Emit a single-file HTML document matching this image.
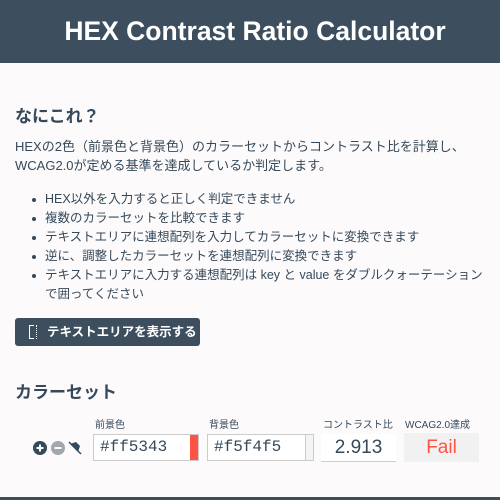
<!DOCTYPE html>
<html><head><meta charset="utf-8"><style>
*{margin:0;padding:0;box-sizing:border-box}
body{width:500px;height:500px;overflow:hidden;background:#fcfafb;font-family:"Liberation Sans","Noto Sans CJK JP",sans-serif;color:#35495a;position:relative}
.hd{position:absolute;left:0;top:0;width:500px;height:63px;background:#3d4f5f;color:#fff;font-weight:bold;font-size:26.5px;text-align:center;line-height:63px;padding-left:10px}
.a{position:absolute;white-space:nowrap}
h2{font-size:17px;font-weight:bold}
p{font-size:13px;line-height:19px}
ul{font-size:12.5px;line-height:19px;list-style:none}
ul li{position:relative;padding-left:0}
ul li:before{content:"";position:absolute;left:-13px;top:8px;width:4px;height:4px;border-radius:50%;background:#35495a}
.btn{position:absolute;left:15px;top:318px;width:185px;height:28px;background:#3d4f5f;border-radius:3px;color:#fff;font-size:12.5px;font-weight:bold;line-height:28px;padding-left:32px}
.lb{font-size:10px;color:#35495a}
.in{position:absolute;top:434px;height:27px;border:1px solid #ccc;background:#fff;font-family:"Liberation Mono",monospace;font-size:16px;line-height:25px;padding-left:6px}
</style></head><body>
<div class="hd">HEX Contrast Ratio Calculator</div>
<h2 class="a" style="left:15px;top:102px">なにこれ？</h2>
<p class="a" style="left:15px;top:137px">HEXの2色（前景色と背景色）のカラーセットからコントラスト比を計算し、<br>WCAG2.0が定める基準を達成しているか判定します。</p>
<ul class="a" style="left:45px;top:190px">
<li>HEX以外を入力すると正しく判定できません</li>
<li>複数のカラーセットを比較できます</li>
<li>テキストエリアに連想配列を入力してカラーセットに変換できます</li>
<li>逆に、調整したカラーセットを連想配列に変換できます</li>
<li>テキストエリアに入力する連想配列は key と value をダブルクォーテーション<br>で囲ってください</li>
</ul>
<div class="btn"><span style="position:absolute;left:14px;top:7px;width:5px;height:14px;border:1.5px solid #fff;border-right:none"></span><span style="position:absolute;left:21px;top:7px;width:1px;height:14px;border-left:1.5px dotted #fff"></span>テキストエリアを表示する</div>
<h2 class="a" style="left:15px;top:378px">カラーセット</h2>
<div class="a lb" style="left:95px;top:416px">前景色</div>
<div class="a lb" style="left:209px;top:416px">背景色</div>
<div class="a lb" style="left:323px;top:416px">コントラスト比</div>
<div class="a lb" style="left:405px;top:416px">WCAG2.0達成</div>
<svg class="a" style="left:32px;top:440px" width="52" height="16">
<circle cx="8" cy="8" r="7" fill="#35495a"/><path d="M4.5 8h7M8 4.5v7" stroke="#fff" stroke-width="2"/>
<circle cx="26" cy="8" r="7" fill="#a0a8ae"/><path d="M22.5 8h7" stroke="#fff" stroke-width="2"/>
<path d="M38 4l6 -2 4 4 -2 6z" fill="#35495a"/><path d="M37 2l12 12" stroke="#35495a" stroke-width="1.5"/>
</svg>
<div class="in" style="left:93px;width:106px">#ff5343<span style="position:absolute;right:0;top:0;width:8px;height:25px;background:#ff5343"></span></div>
<div class="in" style="left:207px;width:107px">#f5f4f5<span style="position:absolute;right:0;top:0;width:8px;height:25px;background:#f5f4f5;border-left:1px solid #ccc"></span></div>
<div class="a" style="left:321px;top:434px;width:75px;height:28px;border-bottom:1px solid #ccc;background:#fff;text-align:center;font-size:19px;line-height:28px">2.913</div>
<div class="a" style="left:404px;top:433px;width:75px;height:29px;background:#f2f1f2;text-align:center;font-size:19px;line-height:29px;color:#ff5343">Fail</div>
<div class="a" style="left:0;top:497px;width:500px;height:3px;background:#3d4f5f"></div>
</body></html>
